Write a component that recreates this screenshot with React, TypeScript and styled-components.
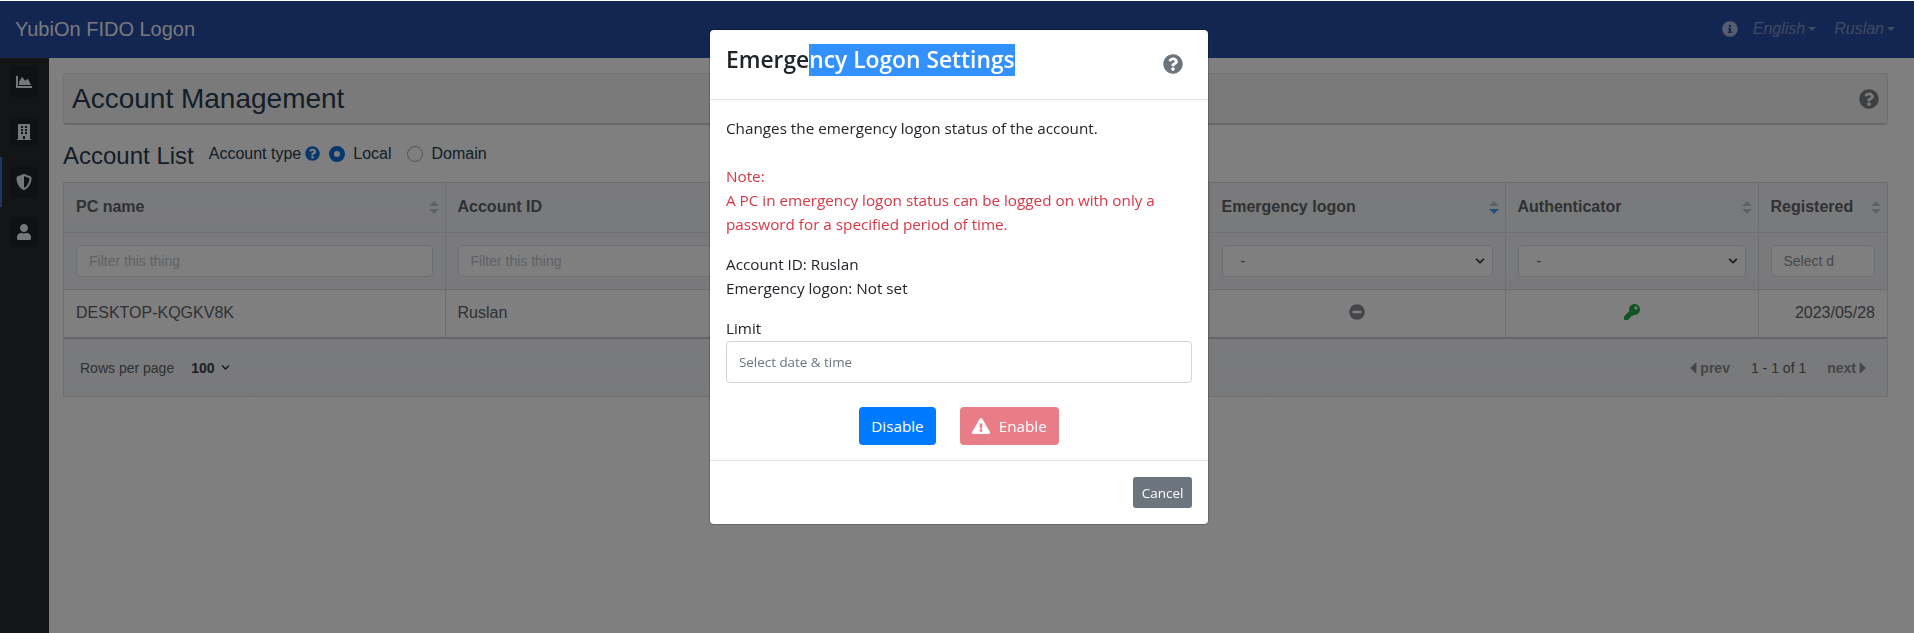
import React from "react";
import styled, { createGlobalStyle } from "styled-components";
import {
  FaChartArea,
  FaBuilding,
  FaShieldAlt,
  FaUser,
  FaQuestionCircle,
  FaInfoCircle,
  FaMinusCircle,
  FaKey,
  FaExclamationTriangle,
  FaChevronDown,
  FaCaretLeft,
  FaCaretRight,
} from "react-icons/fa";

const GlobalStyle = createGlobalStyle`
  html, body { margin: 0; padding: 0; height: 100%; background: #fff; overflow: hidden; }
  body { font-family: "Liberation Sans", Arial, sans-serif; color: #212529; }
  * { box-sizing: border-box; }
`;

const Page = styled.div`
  height: 633px;
  padding-top: 1px;
  display: flex;
  flex-direction: column;
`;

const NavBar = styled.header`
  height: 57px;
  flex: none;
  background: #264aa2;
  display: flex;
  align-items: center;
  padding: 0 19px 0 15px;
`;
const Brand = styled.div`
  font-size: 20px;
  color: rgba(255, 255, 255, 0.95);
  flex: 1;
`;
const NavInfo = styled.span`
  display: flex;
  color: rgba(255, 255, 255, 0.62);
  font-size: 16px;
  margin-right: 15px;
  margin-top: -2px;
`;
const NavMenu = styled.span`
  display: flex;
  align-items: center;
  font-style: italic;
  font-size: 16px;
  color: rgba(255, 255, 255, 0.42);
  margin-top: -2px;
  margin-left: ${(p: { $gap?: number }) => p.$gap ?? 0}px;
  &::after {
    content: "";
    margin-left: 3px;
    border-top: 4px solid currentColor;
    border-left: 4px solid transparent;
    border-right: 4px solid transparent;
  }
`;

const Body = styled.div`
  flex: 1;
  display: flex;
  min-height: 0;
`;
const SideBar = styled.nav`
  width: 49px;
  flex: none;
  background: #282a2e;
  display: flex;
  flex-direction: column;
`;
const SideItem = styled.div<{ $active?: boolean }>`
  height: 50px;
  display: flex;
  align-items: center;
  padding-left: ${(p) => (p.$active ? 7 : 9)}px;
  border-left: ${(p) => (p.$active ? "2px solid #3f6cc9" : "none")};
  &:first-child { margin-top: -1px; }
`;
const SideButton = styled.div`
  width: 30px;
  height: 30px;
  background: #202226;
  border-radius: 3px;
  display: flex;
  align-items: center;
  justify-content: center;
  color: #eceef0;
  font-size: 16px;
`;

const Main = styled.main`
  flex: 1;
  min-width: 0;
  padding: 15px 26px 0 14px;
`;
const TitlePanel = styled.div`
  height: 52px;
  background: #f5f5f5;
  border: 1px solid #e3e3e3;
  border-bottom: 2px solid #d2d2d2;
  border-radius: 4px;
  display: flex;
  align-items: center;
  justify-content: space-between;
  padding: 0 8px 0 8px;
`;
const PageTitle = styled.h1`
  margin: 0;
  font-size: 28px;
  font-weight: 400;
  color: #2a3a4d;
`;
const PanelHelp = styled.span`
  display: flex;
  font-size: 20px;
  color: #7a8086;
`;

const ListBar = styled.div`
  display: flex;
  align-items: center;
  height: 57px;
`;
const ListTitle = styled.h2`
  margin: 0 15px 0 0;
  font-size: 24px;
  font-weight: 400;
  color: #2a3a4d;
  position: relative;
  top: 2px;
`;
const FieldLabel = styled.span`
  font-size: 16px;
  color: #2a3a4d;
  margin-right: 4px;
`;
const LabelHelp = styled.span`
  display: flex;
  font-size: 15px;
  color: #0f6fd6;
  margin-right: 9px;
`;
const Radio = styled.span<{ $checked?: boolean }>`
  width: 16px;
  height: 16px;
  border-radius: 50%;
  flex: none;
  background: ${(p) => (p.$checked ? "#fff" : "transparent")};
  border: ${(p) => (p.$checked ? "5px solid #0f6fd6" : "1px solid #aaaaaa")};
  margin-right: 8px;
`;
const RadioText = styled.span`
  font-size: 16px;
  color: #2a3a4d;
  margin-right: 16px;
`;

const TableWrap = styled.div`
  border: 1px solid #dcdfe6;
  border-bottom: none;
`;
const DataTable = styled.table`
  border-collapse: collapse;
  table-layout: fixed;
  width: 100%;
`;
const HeadCell = styled.th`
  height: 49px;
  position: relative;
  padding: 0 12px;
  text-align: left;
  font-size: 16px;
  font-weight: 700;
  color: #606266;
  background: linear-gradient(#f4f5f8, #f1f3f6);
  border-right: 1px solid #dcdfe6;
  border-bottom: 1px solid #dcdfe6;
  &:last-child { border-right: none; }
`;
const SortMark = styled.span<{ $down?: boolean }>`
  position: absolute;
  right: 6px;
  top: 18px;
  width: 10px;
  height: 13px;
  &::before, &::after {
    content: "";
    position: absolute;
    left: 0;
    border-left: 5px solid transparent;
    border-right: 5px solid transparent;
  }
  &::before { top: 0; border-bottom: 5px solid #bfc3cb; }
  &::after {
    bottom: 0;
    border-top: 5px solid ${(p) => (p.$down ? "#409eff" : "#bfc3cb")};
  }
`;
const FilterCell = styled.td`
  height: 57px;
  padding: 0 12px;
  background: linear-gradient(#f4f5f8, #f1f3f6);
  border-right: 1px solid #dcdfe6;
  border-bottom: 1px solid #dcdfe6;
  &:last-child { border-right: none; }
`;
const FilterInput = styled.input`
  display: block;
  width: 100%;
  height: 32px;
  padding: 0 12px;
  background: #fff;
  border: 1px solid #dcdfe6;
  border-radius: 4px;
  font-family: inherit;
  font-size: 14px;
  color: #606266;
  &::placeholder { color: #c0c4cc; opacity: 1; }
`;
const DateInput = styled(FilterInput)`
  &::placeholder { color: #8e9097; }
`;
const FilterSelect = styled.div`
  height: 32px;
  background: #fff;
  border: 1px solid #dcdfe6;
  border-radius: 4px;
  display: flex;
  align-items: center;
  justify-content: space-between;
  padding: 0 7px 0 18px;
  font-size: 14px;
  color: #606266;
`;
const SelectChevron = styled.span`
  display: flex;
  font-size: 10px;
  color: #333;
`;
const DataCell = styled.td<{ $align?: string }>`
  height: 49px;
  padding: 0 12px;
  font-size: 16px;
  color: #606266;
  background: #fff;
  text-align: ${(p) => p.$align ?? "left"};
  border-right: 1px solid #dcdfe6;
  border-bottom: 2px solid #c9ccd3;
  &:last-child { border-right: none; }
  svg { vertical-align: middle; }
`;
const StatusIcon = styled.span<{ $color: string }>`
  display: inline-flex;
  font-size: 16px;
  margin-top: 2px;
  color: ${(p) => p.$color};
`;

const TableFooter = styled.div`
  height: 58px;
  background: linear-gradient(#f4f5f8, #f1f3f6);
  border-bottom: 1px solid #dcdfe6;
  display: flex;
  align-items: center;
  justify-content: space-between;
  padding: 0 20px 0 16px;
  font-size: 14px;
  color: #606266;
`;
const FooterGroup = styled.div`
  display: flex;
  align-items: center;
`;
const PageSize = styled.strong`
  color: #3a3f4a;
  margin: 0 4px 0 17px;
`;
const PageLink = styled.strong`
  display: flex;
  align-items: center;
  gap: 3px;
  color: #8b8d91;
  svg { width: 8px; height: 18px; }
`;
const PageCount = styled.span`
  margin: 0 21px;
`;
const SmallChevron = styled.span`
  display: flex;
  font-size: 9px;
  color: #333;
  margin-left: 2px;
`;

const Backdrop = styled.div`
  position: fixed;
  top: 1px;
  left: 0;
  right: 0;
  bottom: 0;
  background: #000;
  opacity: 0.5;
`;
const Dialog = styled.section`
  position: fixed;
  top: 29px;
  left: 709px;
  width: 500px;
  height: 496px;
  background: #fff;
  border: 1px solid rgba(0, 0, 0, 0.2);
  background-clip: padding-box;
  border-radius: 4.8px;
  font-family: "Open Sans", "Noto Sans", sans-serif;
  color: #212529;
  display: flex;
  flex-direction: column;
`;
const DialogHeader = styled.div`
  height: 70px;
  flex: none;
  border-bottom: 1px solid #dee2e6;
  display: flex;
  align-items: flex-start;
  justify-content: space-between;
  padding: 14px 25px 0 16px;
`;
const DialogTitle = styled.h5`
  margin: 0;
  font-size: 22.8px;
  font-weight: 600;
  line-height: 32px;
  color: #212529;
  white-space: nowrap;
`;
const Selected = styled.span`
  display: inline-block;
  background: #3390ff;
  color: #fff;
`;
const DialogHelp = styled.span`
  display: flex;
  font-size: 20px;
  color: #6c757d;
  margin-top: 10px;
`;
const DialogBody = styled.div`
  flex: 1;
  padding: 16px 16px 0 16px;
  font-size: 15.25px;
  line-height: 24px;
`;
const Para = styled.p`
  margin: 0 0 16px;
`;
const Danger = styled.p`
  margin: 0 0 16px;
  color: #dc3545;
  padding-top: 8px;
`;
const LimitLabel = styled.label`
  display: block;
  line-height: 24px;
  margin-bottom: 1px;
`;
const DateField = styled.input`
  display: block;
  width: 100%;
  height: 42px;
  padding: 0 12px;
  border: 1px solid #ced4da;
  border-radius: 4px;
  font-family: inherit;
  font-size: 13.4px;
  &::placeholder { color: #6c757d; opacity: 1; }
`;
const ActionRow = styled.div`
  display: flex;
  justify-content: center;
  gap: 24px;
  margin-top: 24px;
`;
const ActionButton = styled.button<{ $bg: string }>`
  height: 38px;
  padding: 0 12px;
  border: none;
  border-radius: 4px;
  background: ${(p) => p.$bg};
  color: #fff;
  font-family: inherit;
  font-size: 15.25px;
  display: flex;
  align-items: center;
  gap: 9px;
  svg { font-size: 18px; }
`;
const DialogFooter = styled.div`
  height: 64px;
  flex: none;
  border-top: 1px solid #dee2e6;
  display: flex;
  justify-content: flex-end;
  padding: 16px 16px 0 0;
`;
const CancelButton = styled.button`
  width: 59px;
  height: 31px;
  padding: 0;
  border: none;
  border-radius: 3px;
  background: #6c757d;
  color: #fff;
  font-family: inherit;
  font-size: 13.5px;
`;

export default function App() {
  return (
    <>
      <GlobalStyle />
      <Page>
        <NavBar>
          <Brand>YubiOn FIDO Logon</Brand>
          <NavInfo><FaInfoCircle /></NavInfo>
          <NavMenu>English</NavMenu>
          <NavMenu $gap={18}>Ruslan</NavMenu>
        </NavBar>
        <Body>
          <SideBar>
            <SideItem><SideButton><FaChartArea /></SideButton></SideItem>
            <SideItem><SideButton><FaBuilding /></SideButton></SideItem>
            <SideItem $active><SideButton><FaShieldAlt /></SideButton></SideItem>
            <SideItem><SideButton><FaUser /></SideButton></SideItem>
          </SideBar>
          <Main>
            <TitlePanel>
              <PageTitle>Account Management</PageTitle>
              <PanelHelp><FaQuestionCircle /></PanelHelp>
            </TitlePanel>
            <ListBar>
              <ListTitle>Account List</ListTitle>
              <FieldLabel>Account type</FieldLabel>
              <LabelHelp><FaQuestionCircle /></LabelHelp>
              <Radio $checked />
              <RadioText>Local</RadioText>
              <Radio />
              <RadioText>Domain</RadioText>
            </ListBar>
            <TableWrap>
              <DataTable>
                <colgroup>
                  <col style={{ width: 381 }} />
                  <col style={{ width: 764 }} />
                  <col style={{ width: 296 }} />
                  <col style={{ width: 253 }} />
                  <col />
                </colgroup>
                <thead>
                  <tr>
                    <HeadCell>PC name<SortMark /></HeadCell>
                    <HeadCell>Account ID<SortMark /></HeadCell>
                    <HeadCell>Emergency logon<SortMark $down /></HeadCell>
                    <HeadCell>Authenticator<SortMark /></HeadCell>
                    <HeadCell>Registered<SortMark /></HeadCell>
                  </tr>
                  <tr>
                    <FilterCell><FilterInput placeholder="Filter this thing" /></FilterCell>
                    <FilterCell><FilterInput placeholder="Filter this thing" /></FilterCell>
                    <FilterCell><FilterSelect>-<SelectChevron><FaChevronDown /></SelectChevron></FilterSelect></FilterCell>
                    <FilterCell><FilterSelect>-<SelectChevron><FaChevronDown /></SelectChevron></FilterSelect></FilterCell>
                    <FilterCell><DateInput placeholder="Select d" /></FilterCell>
                  </tr>
                </thead>
                <tbody>
                  <tr>
                    <DataCell>DESKTOP-KQGKV8K</DataCell>
                    <DataCell>Ruslan</DataCell>
                    <DataCell $align="center"><StatusIcon $color="#868b91"><FaMinusCircle /></StatusIcon></DataCell>
                    <DataCell $align="center"><StatusIcon $color="#28a745"><FaKey /></StatusIcon></DataCell>
                    <DataCell $align="right">2023/05/28</DataCell>
                  </tr>
                </tbody>
              </DataTable>
              <TableFooter>
                <FooterGroup>
                  Rows per page
                  <PageSize>100</PageSize>
                  <SmallChevron><FaChevronDown /></SmallChevron>
                </FooterGroup>
                <FooterGroup>
                  <PageLink><FaCaretLeft />prev</PageLink>
                  <PageCount>1 - 1 of 1</PageCount>
                  <PageLink>next<FaCaretRight /></PageLink>
                </FooterGroup>
              </TableFooter>
            </TableWrap>
          </Main>
        </Body>
      </Page>
      <Backdrop />
      <Dialog>
        <DialogHeader>
          <DialogTitle>Emerge<Selected>ncy Logon Settings</Selected></DialogTitle>
          <DialogHelp><FaQuestionCircle /></DialogHelp>
        </DialogHeader>
        <DialogBody>
          <Para>Changes the emergency logon status of the account.</Para>
          <Danger>Note:<br />A PC in emergency logon status can be logged on with only a password for a specified period of time.</Danger>
          <Para>Account ID: Ruslan<br />Emergency logon: Not set</Para>
          <LimitLabel>Limit</LimitLabel>
          <DateField placeholder="Select date &amp; time" />
          <ActionRow>
            <ActionButton $bg="#007bff">Disable</ActionButton>
            <ActionButton $bg="#e87c87"><FaExclamationTriangle />Enable</ActionButton>
          </ActionRow>
        </DialogBody>
        <DialogFooter>
          <CancelButton>Cancel</CancelButton>
        </DialogFooter>
      </Dialog>
    </>
  );
}
